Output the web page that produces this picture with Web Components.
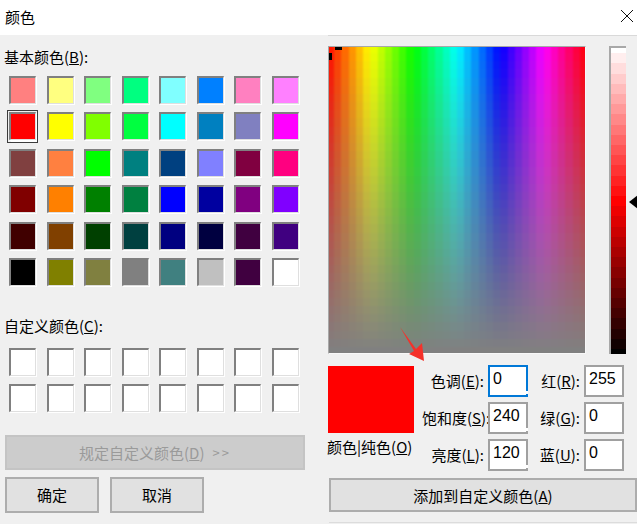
<!DOCTYPE html>
<html lang="zh">
<head>
<meta charset="utf-8">
<title>颜色</title>
<style>
  html, body { margin: 0; height: 100%; background: #f0f0f0; overflow: hidden; }
  body { font: 15px "Noto Sans CJK SC", "Liberation Sans", sans-serif; color: #000; }
</style>
</head>
<body>
<color-dialog></color-dialog>

<template id="title-tpl">
  <style>
    :host { display: flex; align-items: center; justify-content: space-between; height: 35px; background: #fff; padding: 0 0 3px 5px; box-sizing: border-box; font-size: 15px; }
    svg { display: block; margin-right: 4px; }
  </style>
  <slot></slot>
  <svg width="12" height="12" viewBox="0 0 12 12"><path d="M0 0L12 12M12 0L0 12" stroke="#111" stroke-width="1" fill="none"/></svg>
</template>

<template id="swatch-tpl">
  <style>
    :host { display: block; position: relative; width: 27px; height: 28px; box-sizing: border-box; border: solid; border-width: 2px 1px 1px 2px; border-color: #808080 #dfdfdf #dfdfdf #808080; background: var(--c, #fff); box-shadow: 1px 1px 0 #fff; }
    :host([selected])::after { content: ""; position: absolute; left: -4px; top: -4px; right: -3px; bottom: -4px; border: 1.5px solid #3c3c3c; }
    :host([selected]) { box-shadow: 1px 1px 0 #fff, 2px 2px 0 #fff; }
  </style>
</template>

<template id="grid-tpl">
  <style>
    :host { display: grid; grid-template-columns: repeat(8, 27px); column-gap: 10.5px; row-gap: var(--row-gap, 8.4px); padding-left: 9px; }
  </style>
  <slot></slot>
</template>

<template id="button-tpl">
  <style>
    :host { display: flex; align-items: center; justify-content: center; box-sizing: border-box; height: 35px; border: 2px solid #adadad; background: #e1e1e1; font-size: 15px; }
    :host([disabled]) { background: #cccccc; border-color: #c4c4c4; color: #9a9a9a; }
  </style>
  <slot></slot>
</template>

<template id="field-tpl">
  <style>
    :host { display: contents; }
    .lab { text-align: right; line-height: 32px; white-space: nowrap; padding-right: 4px; }
    .box { position: relative; box-sizing: border-box; height: 32px; width: 40px; border: 2px solid #a0a0a0; background: #fff; padding-left: 3px; line-height: 24px; font-size: 16px; font-family: "Liberation Sans", sans-serif; }
    :host([focused]) .box { border-color: #0078d7; }
    :host([notch]) .box::after { content: ""; position: absolute; right: -2px; bottom: 1px; width: 2px; height: 3px; background: #fff; }
  </style>
  <div class="lab"><slot></slot></div>
  <div class="box"></div>
</template>

<template id="spectrum-tpl">
  <style>
    :host { display: block; position: relative; width: 258px; height: 308px; box-sizing: border-box; border: solid; border-width: 1px; border-color: #a8a8a8 #f8f8f8 #f8f8f8 #a8a8a8; overflow: hidden; }
    canvas { display: block; width: calc(100% + 4px); height: calc(100% + 4px); margin: -2px; filter: blur(1px); }
    i { position: absolute; background: #000; }
    .h { left: 6px; top: 0; width: 7px; height: 3px; }
    .v { left: 0; top: 6px; width: 3px; height: 7px; }
  </style>
  <canvas width="260" height="310"></canvas>
  <i class="h"></i><i class="v"></i>
</template>

<template id="lum-tpl">
  <style>
    :host { display: block; position: relative; width: 17px; height: 308px; box-sizing: border-box; border: solid; border-width: 2px 0 0 2px; border-color: #a8a8a8; }
    canvas { display: block; width: 100%; height: 100%; }
    svg { position: absolute; left: 17px; top: 146px; }
  </style>
  <canvas width="15" height="306"></canvas>
  <svg width="10" height="16" viewBox="0 0 10 16"><path d="M1 8L10 1V15Z" fill="#000"/></svg>
</template>

<template id="dialog-tpl">
  <style>
    :host { display: block; position: relative; width: 637px; height: 524px; overflow: hidden; background: #f0f0f0; font-size: 15px; filter: blur(.3px); }
    .main { display: flex; height: 489px; }
    .left { width: 328px; box-sizing: border-box; padding-top: 11px; display: flex; flex-direction: column; }
    .cap { padding-left: 4px; line-height: 22px; white-space: nowrap; }
    .base { margin-top: 8px; }
    .cap2 { margin-top: 29px; }
    .custom { margin-top: 11px; }
    .define { margin: 23px 0 0 5px; width: 300px; }
    .define span { margin-left: 8px; font-size: 13px; letter-spacing: 2px; }
    .acts { display: flex; gap: 11px; margin: 7px 0 0 5px; }
    .acts dialog-button { width: 94px; height: 36px; }
    .right { flex: 1; min-width: 0; box-sizing: border-box; border-top: 1px solid #d9d9d9; padding-top: 10px; }
    .top { display: flex; gap: 23px; }
    .bottom { display: flex; margin-top: 11px; }
    .swatchcol { width: 94px; }
    .preview { width: 86px; height: 67px; margin-top: 1px; background: #ff0000; }
    .pname { margin: 3px 0 0 -1px; line-height: 22px; white-space: nowrap; }
    .fields { display: grid; grid-template-columns: 66px 40px 56px 40px; grid-auto-rows: 32px; row-gap: 5px; }
    .add { margin: 7px 0 0 1px; width: 308px; height: 34px; }
    .arrow { position: absolute; left: 398px; top: 326px; }
    .rule { position: absolute; left: 329px; top: 522px; right: 0; height: 1px; background: #dcdcdc; }
  </style>
  <title-bar>颜色</title-bar>
  <div class="main">
    <div class="left">
      <div class="cap">基本颜色(<u>B</u>):</div>
      <swatch-grid class="base" id="base"></swatch-grid>
      <div class="cap cap2">自定义颜色(<u>C</u>):</div>
      <swatch-grid class="custom" id="custom" style="--row-gap:8px"></swatch-grid>
      <dialog-button class="define" disabled>规定自定义颜色(<u>D</u>)<span>&gt;&gt;</span></dialog-button>
      <div class="acts">
        <dialog-button>确定</dialog-button>
        <dialog-button>取消</dialog-button>
      </div>
    </div>
    <div class="right">
      <div class="top">
        <spectrum-box></spectrum-box>
        <lum-bar></lum-bar>
      </div>
      <div class="bottom">
        <div class="swatchcol">
          <div class="preview"></div>
          <div class="pname">颜色|纯色(<u>O</u>)</div>
        </div>
        <div class="fields">
          <num-field value="0" focused notch>色调(<u>E</u>):</num-field>
          <num-field value="255">红(<u>R</u>):</num-field>
          <num-field value="240" notch>饱和度(<u>S</u>):</num-field>
          <num-field value="0">绿(<u>G</u>):</num-field>
          <num-field value="120" notch>亮度(<u>L</u>):</num-field>
          <num-field value="0">蓝(<u>U</u>):</num-field>
        </div>
      </div>
      <dialog-button class="add">添加到自定义颜色(<u>A</u>)</dialog-button>
    </div>
  </div>
  <svg class="arrow" width="28" height="36" viewBox="398 326 28 36"><path d="M400 327L416 349L422 343L424 361L409 354L414 351Z" fill="#f5312a"/></svg>
  <div class="rule"></div>
</template>

<script>
function attach(el, id) {
  const root = el.attachShadow({ mode: "open" });
  root.appendChild(document.getElementById(id).content.cloneNode(true));
  return root;
}

// hue 0..1 with saturation going to the mid grey at the bottom
function spectrumColor(h, s) {
  const f = ((h * 6) % 6);
  const i = Math.floor(f), t = f - i;
  const rows = [[1, t, 0], [1 - t, 1, 0], [0, 1, t], [0, 1 - t, 1], [t, 0, 1], [1, 0, 1 - t]];
  return rows[i].map(v => Math.round(v * 255 * s + 128 * (1 - s)));
}

class TitleBar extends HTMLElement {
  connectedCallback() { if (!this.shadowRoot) attach(this, "title-tpl"); }
}
class ColorSwatch extends HTMLElement {
  connectedCallback() {
    if (!this.shadowRoot) attach(this, "swatch-tpl");
    this.style.setProperty("--c", this.getAttribute("color") || "#fff");
  }
}
class SwatchGrid extends HTMLElement {
  connectedCallback() { if (!this.shadowRoot) attach(this, "grid-tpl"); }
}
class DialogButton extends HTMLElement {
  connectedCallback() { if (!this.shadowRoot) attach(this, "button-tpl"); }
}
class NumField extends HTMLElement {
  connectedCallback() {
    if (this.shadowRoot) return;
    const root = attach(this, "field-tpl");
    root.querySelector(".box").textContent = this.getAttribute("value");
  }
}
class SpectrumBox extends HTMLElement {
  connectedCallback() {
    if (this.shadowRoot) return;
    const root = attach(this, "spectrum-tpl");
    const c = root.querySelector("canvas"), g = c.getContext("2d");
    const cols = 36, rows = 38;
    for (let y = 0; y < rows; y++) {
      for (let x = 0; x < cols; x++) {
        const [r, gg, b] = spectrumColor((x + .5) / cols, 1 - y / (rows - 1));
        g.fillStyle = `rgb(${r},${gg},${b})`;
        const x0 = Math.round(x * c.width / cols), y0 = Math.round(y * c.height / rows);
        g.fillRect(x0, y0, Math.ceil(c.width / cols) + 1, Math.ceil(c.height / rows) + 1);
      }
    }
  }
}
class LumBar extends HTMLElement {
  connectedCallback() {
    if (this.shadowRoot) return;
    const root = attach(this, "lum-tpl");
    const c = root.querySelector("canvas"), g = c.getContext("2d");
    const rows = 31;
    for (let y = 0; y < rows; y++) {
      const l = 1 - y / (rows - 1);
      const v = l > .5 ? [255, (l - .5) * 2 * 255, (l - .5) * 2 * 255] : [l * 2 * 255, 0, 0];
      g.fillStyle = `rgb(${v.map(Math.round).join(",")})`;
      g.fillRect(0, Math.round((y - .5) * c.height / (rows - 1)), c.width, Math.ceil(c.height / (rows - 1)) + 1);
    }
  }
}
class ColorDialog extends HTMLElement {
  connectedCallback() {
    if (this.shadowRoot) return;
    const root = attach(this, "dialog-tpl");
    const basic = [
      "#ff8080","#ffff80","#80ff80","#00ff80","#80ffff","#0080ff","#ff80c0","#ff80ff",
      "#ff0000","#ffff00","#80ff00","#00ff40","#00ffff","#0080c0","#8080c0","#ff00ff",
      "#804040","#ff8040","#00ff00","#008080","#004080","#8080ff","#800040","#ff0080",
      "#800000","#ff8000","#008000","#008040","#0000ff","#0000a0","#800080","#8000ff",
      "#400000","#804000","#004000","#004040","#000080","#000040","#400040","#400080",
      "#000000","#808000","#808040","#808080","#408080","#c0c0c0","#400040","#ffffff"
    ];
    const base = root.getElementById("base");
    basic.forEach((col, i) => {
      const s = document.createElement("color-swatch");
      s.setAttribute("color", col);
      if (i === 8) s.setAttribute("selected", "");
      base.appendChild(s);
    });
    const custom = root.getElementById("custom");
    for (let i = 0; i < 16; i++) custom.appendChild(document.createElement("color-swatch"));
  }
}
customElements.define("title-bar", TitleBar);
customElements.define("color-swatch", ColorSwatch);
customElements.define("swatch-grid", SwatchGrid);
customElements.define("dialog-button", DialogButton);
customElements.define("num-field", NumField);
customElements.define("spectrum-box", SpectrumBox);
customElements.define("lum-bar", LumBar);
customElements.define("color-dialog", ColorDialog);
</script>
</body>
</html>
